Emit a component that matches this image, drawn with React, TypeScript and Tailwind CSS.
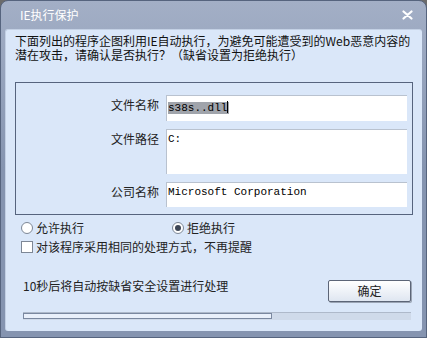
import React from "react";

const cn = "font-['Noto_Sans_CJK_SC','Noto_Sans',sans-serif]";

function Field({ label, value, h, selected }: { label: string; value: string; h: string; selected?: boolean }) {
  return (
    <div className="flex items-start">
      <div className="w-[150px] pr-[7px] pt-[3px] text-right text-[12px] leading-[14px] text-[#222]">{label}</div>
      <div
        className={`${h} w-[241px] border-t border-l border-[#b9c2cf] bg-white pl-[1px] pt-[3px] font-['Liberation_Mono',monospace] text-[11px] leading-[12px] text-black`}
      >
        {selected ? (
          <span className="bg-[#a0a4ab] pr-[1px]">
            {value}
            <span className="inline-block h-[12px] w-[1px] translate-y-[2px] bg-black" />
          </span>
        ) : (
          value
        )}
      </div>
    </div>
  );
}

export default function App() {
  return (
    <div className={`${cn} h-[338px] w-[427px] overflow-hidden bg-[#6b6b6b]`}>
      <div className="flex h-full flex-col rounded-t-[8px] bg-gradient-to-b from-[#a3afc6] via-[#8594b0] to-[#8594b0] border border-[#56647e]">
        {/* title bar */}
        <div className="flex h-[28px] shrink-0 items-center justify-between pl-[19px] pr-[13px]">
          <span className="text-[12px] text-white">IE执行保护</span>
          <svg width="11" height="10" viewBox="0 0 11 10">
            <path d="M1.5 1.5 L9.5 8.5 M9.5 1.5 L1.5 8.5" stroke="white" strokeWidth="2.2" strokeLinecap="round" />
          </svg>
        </div>
        {/* body */}
        <div className="mx-[4px] mb-[6px] flex flex-1 flex-col rounded-[3px] bg-[#dae7f9] border-l border-t border-[#c3d0e4] px-[9px] pt-[4px]">
          <p className="text-[12px] leading-[14px] text-[#111]">
            下面列出的程序企图利用IE自动执行，为避免可能遭受到的Web恶意内容的潜在攻击，请确认是否执行？（缺省设置为拒绝执行）
          </p>
          <div className="mt-[20px] flex flex-col gap-[8px] border border-[#56647e] pb-[7px] pt-[12px]">
            <Field label="文件名称" value="s38s..dll" h="h-[26px]" selected />
            <Field label="文件路径" value="C:" h="h-[45px]" />
            <Field label="公司名称" value="Microsoft Corporation" h="h-[25px]" />
          </div>
          <div className="mt-[6px] flex items-center text-[12px] leading-[14px] text-[#222]">
            <div className="flex w-[157px] items-center gap-[3px] pl-[6px]">
              <span className="h-[12px] w-[12px] rounded-full border border-[#7d8796] bg-white" />
              允许执行
            </div>
            <div className="flex items-center gap-[3px]">
              <span className="flex h-[12px] w-[12px] items-center justify-center rounded-full border border-[#7d8796] bg-white">
                <span className="h-[6px] w-[6px] rounded-full bg-[#3d4656]" />
              </span>
              拒绝执行
            </div>
          </div>
          <div className="mt-[5px] flex items-center gap-[3px] pl-[6px] text-[12px] leading-[14px] text-[#222]">
            <span className="h-[12px] w-[12px] border border-[#7d8796] bg-white" />
            对该程序采用相同的处理方式，不再提醒
          </div>
          <div className="mt-[24px] flex items-start justify-between pl-[8px] pr-[2px]">
            <span className="pt-[1px] text-[12px] leading-[14px] text-[#222]">10秒后将自动按缺省安全设置进行处理</span>
            <button className="mt-[2px] h-[22px] w-[83px] rounded-[2px] border border-[#5c6577] bg-gradient-to-b from-white to-[#dfe6f1] text-[12px] text-[#222] shadow-[1px_1px_0_#9aa4b4]">
              确定
            </button>
          </div>
          <div className="mt-[10px] ml-[8px] mr-[2px] h-[8px] border-t border-[#aeb9ca] bg-[#cfdaea]">
            <div className="h-[6px] w-[249px] border border-[#7a88a0] bg-[#e9f0fb]" />
          </div>
        </div>
      </div>
    </div>
  );
}
